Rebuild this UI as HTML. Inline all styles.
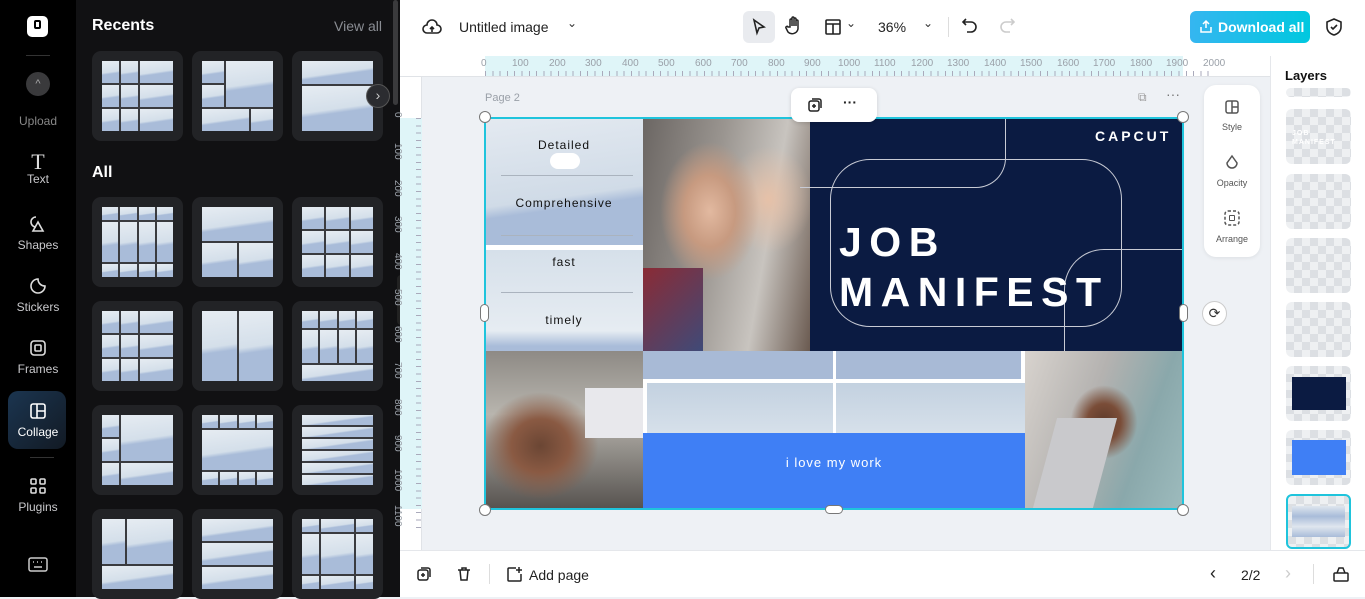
<!DOCTYPE html>
<html><head><meta charset="utf-8"><style>
*{box-sizing:border-box;margin:0;padding:0}
body{width:1365px;height:597px;overflow:hidden;font-family:"Liberation Sans",sans-serif;background:#eef1f5;position:relative}
.abs{position:absolute}
#rail{left:0;top:0;width:76px;height:597px;background:#000}
#panel{left:76px;top:0;width:324px;height:597px;background:#111113}
.ri{position:absolute;left:0;width:76px;text-align:center;color:#c9c9cc;font-size:12px}
.ri svg{display:block;margin:0 auto 4px}
.card{position:absolute;width:91px;height:90px;background:#222326;border-radius:9px;padding:10px}
.g{width:100%;height:100%;display:grid;gap:2px;background:#3a3b3f}
.g div{background:linear-gradient(172deg,#e6ecf2 0%,#d4dfea 50%,#a9bcd9 58%,#a9bcd9 100%)}
.sky{background:linear-gradient(172deg,#e4eaf1 0%,#d0dbe7 60%,#a9bcd9 68%,#a9bcd9 100%)}
#top{left:400px;top:0;width:965px;height:56px;background:#fff}
#bottom{left:400px;top:550px;width:965px;height:47px;background:#fff;border-top:1px solid #e5e7eb}
#layers{left:1270px;top:56px;width:95px;height:494px;background:#fff;border-left:1px solid #e5e7eb}
.lt{position:absolute;left:15px;width:65px;height:55px;border-radius:6px;background-color:#eef0f2;
background-image:linear-gradient(45deg,#dcdfe3 25%,transparent 25%,transparent 75%,#dcdfe3 75%),linear-gradient(45deg,#dcdfe3 25%,transparent 25%,transparent 75%,#dcdfe3 75%);background-size:16px 16px;background-position:0 0,8px 8px}
.h{position:absolute;width:12px;height:12px;border-radius:50%;background:#fff;border:1px solid #777}
</style></head><body>

<div id="rail" class="abs">
 <div class="abs" style="left:27px;top:16px;width:21px;height:21px;background:#fff;border-radius:5px"><div style="position:absolute;left:7px;top:4px;width:7px;height:9px;border:2px solid #000;border-radius:2px"></div></div>
 <div class="abs" style="left:26px;top:55px;width:24px;height:1px;background:#333"></div>
 <div class="abs" style="left:26px;top:72px;width:24px;height:24px;border-radius:50%;background:#3a3a3c;color:#aaa;font-size:11px;text-align:center;line-height:24px">^</div>
 <div class="ri" style="top:114px;color:#888">Upload</div>
 <div class="ri" style="top:152px"><div style="font-size:22px;font-family:'Liberation Serif',serif;color:#ddd;line-height:20px">T</div>Text</div>
 <div class="ri" style="top:214px"><svg width="20" height="20" viewBox="0 0 20 20" fill="none" stroke="#ddd" stroke-width="1.6"><path d="M8 3a5 5 0 1 0 0 10M10 8l5 9H5z"/></svg>Shapes</div>
 <div class="ri" style="top:276px"><svg width="20" height="20" viewBox="0 0 20 20" fill="none" stroke="#ddd" stroke-width="1.6"><path d="M17 10a7 7 0 1 1-7-7c0 4 3 7 7 7z"/></svg>Stickers</div>
 <div class="ri" style="top:338px"><svg width="20" height="20" viewBox="0 0 20 20" fill="none" stroke="#ddd" stroke-width="1.6"><rect x="3" y="3" width="14" height="14" rx="3"/><rect x="7" y="7" width="6" height="6" rx="1"/></svg>Frames</div>
 <div class="abs" style="left:8px;top:391px;width:58px;height:58px;border-radius:10px;background:linear-gradient(135deg,#1b3550,#121a24)"></div>
 <div class="ri" style="top:401px;color:#fff"><svg width="20" height="20" viewBox="0 0 20 20" fill="none" stroke="#fff" stroke-width="1.6"><rect x="3" y="3" width="14" height="14" rx="2"/><path d="M9 3v14M9 10h8"/></svg>Collage</div>
 <div class="abs" style="left:30px;top:457px;width:24px;height:1px;background:#333"></div>
 <div class="ri" style="top:476px"><svg width="20" height="20" viewBox="0 0 20 20" fill="none" stroke="#ddd" stroke-width="1.6"><rect x="3" y="3" width="5" height="5" rx="1"/><rect x="12" y="3" width="5" height="5" rx="1"/><rect x="3" y="12" width="5" height="5" rx="1"/><rect x="12" y="12" width="5" height="5" rx="1"/></svg>Plugins</div>
 <svg class="abs" style="left:28px;top:557px" width="20" height="16" viewBox="0 0 20 16" fill="none" stroke="#ccc" stroke-width="1.5"><rect x="1" y="1" width="18" height="13" rx="2"/><path d="M5 5h1M9 5h1M13 5h1M6 10h8"/></svg>
</div>

<div id="panel" class="abs">
 <div class="abs" style="left:16px;top:17px;color:#fff;font-weight:bold;font-size:16px">Recents</div>
 <div class="abs" style="left:258px;top:18px;color:#8a8d93;font-size:14px">View all</div>
 <div class="abs" style="left:16px;top:164px;color:#fff;font-weight:bold;font-size:16px">All</div>
 <div class="abs" style="left:317px;top:0;width:5px;height:105px;background:#3a3a3c;border-radius:3px"></div>
</div>

<div class="card" style="left:92px;top:51px"><div class="g" style="grid-template-columns:1fr 1fr 2fr;grid-template-rows:1fr 1fr 1fr"><div></div><div></div><div></div><div></div><div></div><div></div><div></div><div></div><div></div></div></div>
<div class="card" style="left:192px;top:51px"><div class="g" style="grid-template-columns:1fr 1fr 1fr;grid-template-rows:1fr 1fr 1fr"><div></div><div style="grid-column:span 2;grid-row:span 2"></div><div></div><div style="grid-column:span 2"></div><div></div></div></div>
<div class="card" style="left:292px;top:51px"><div class="g" style="grid-template-rows:1fr 2fr"><div></div><div></div></div></div>
<div class="abs" style="left:366px;top:84px;width:24px;height:24px;border-radius:50%;background:#2b2c30;border:1px solid #555;color:#ccc;text-align:center;line-height:21px;font-size:14px">›</div>

<div class="card" style="left:92px;top:197px"><div class="g" style="grid-template-columns:1fr 1fr 1fr 1fr;grid-template-rows:1fr 3fr 1fr"><div></div><div></div><div></div><div></div><div></div><div></div><div></div><div></div><div></div><div></div><div></div><div></div></div></div>
<div class="card" style="left:192px;top:197px"><div class="g" style="grid-template-columns:1fr 1fr;grid-template-rows:1fr 1fr"><div style="grid-column:span 2"></div><div></div><div></div></div></div>
<div class="card" style="left:292px;top:197px"><div class="g" style="grid-template-columns:1fr 1fr 1fr;grid-template-rows:1fr 1fr 1fr"><div></div><div></div><div></div><div></div><div></div><div></div><div></div><div></div><div></div></div></div>
<div class="card" style="left:92px;top:301px"><div class="g" style="grid-template-columns:1fr 1fr 2fr;grid-template-rows:1fr 1fr 1fr"><div></div><div></div><div></div><div></div><div></div><div></div><div></div><div></div><div></div></div></div>
<div class="card" style="left:192px;top:301px"><div class="g" style="grid-template-columns:1fr 1fr"><div></div><div></div></div></div>
<div class="card" style="left:292px;top:301px"><div class="g" style="grid-template-columns:1fr 1fr 1fr 1fr;grid-template-rows:1fr 2fr 1fr"><div></div><div></div><div></div><div></div><div></div><div></div><div></div><div></div><div style="grid-column:span 4"></div></div></div>
<div class="card" style="left:92px;top:405px"><div class="g" style="grid-template-columns:1fr 3fr;grid-template-rows:1fr 1fr 1fr"><div></div><div style="grid-row:span 2"></div><div></div><div></div><div></div></div></div>
<div class="card" style="left:192px;top:405px"><div class="g" style="grid-template-columns:1fr 1fr 1fr 1fr;grid-template-rows:1fr 3fr 1fr"><div></div><div></div><div></div><div></div><div style="grid-column:span 4"></div><div></div><div></div><div></div><div></div></div></div>
<div class="card" style="left:292px;top:405px"><div class="g" style="grid-template-rows:repeat(6,1fr)"><div></div><div></div><div></div><div></div><div></div><div></div></div></div>
<div class="card" style="left:92px;top:509px"><div class="g" style="grid-template-columns:1fr 2fr;grid-template-rows:2fr 1fr"><div></div><div></div><div style="grid-column:span 2"></div></div></div>
<div class="card" style="left:192px;top:509px"><div class="g" style="grid-template-rows:1fr 1fr 1fr"><div></div><div></div><div></div></div></div>
<div class="card" style="left:292px;top:509px"><div class="g" style="grid-template-columns:1fr 2fr 1fr;grid-template-rows:1fr 3fr 1fr"><div></div><div></div><div></div><div></div><div></div><div></div><div></div><div></div><div></div></div></div>
<div class="abs" style="left:397px;top:275px;width:8px;height:50px;background:#222;border-radius:4px"></div>

<div id="top" class="abs">
 <svg class="abs" style="left:22px;top:17px" width="20" height="20" viewBox="0 0 20 20" fill="none" stroke="#222" stroke-width="1.6"><path d="M5 16h10a4 4 0 0 0 0-8 5 5 0 0 0-10 0 4 4 0 0 0 0 8z"/><path d="M10 15v-5M8 12l2-2 2 2"/></svg>
 <div class="abs" style="left:59px;top:19px;font-size:14px;color:#222">Untitled image</div>
 <div class="abs" style="left:167px;top:16px;font-size:12px;color:#333">⌄</div>
 <div class="abs" style="left:343px;top:11px;width:32px;height:32px;border-radius:6px;background:#e9ebef"></div>
 <svg class="abs" style="left:351px;top:18px" width="16" height="18" viewBox="0 0 16 18" fill="none" stroke="#222" stroke-width="1.6"><path d="M3 2l10 7-5 1-2 5z"/></svg>
 <svg class="abs" style="left:385px;top:16px" width="18" height="20" viewBox="0 0 18 20" fill="none" stroke="#222" stroke-width="1.5"><path d="M5 11V4a1 1 0 0 1 2 0v6V2a1 1 0 0 1 2 0v8V3a1 1 0 0 1 2 0v7V5a1 1 0 0 1 2 0v8a6 6 0 0 1-10 3l-2-4a1 1 0 0 1 2-1z"/></svg>
 <svg class="abs" style="left:424px;top:18px" width="18" height="18" viewBox="0 0 18 18" fill="none" stroke="#222" stroke-width="1.6"><rect x="2" y="2" width="14" height="14" rx="1"/><path d="M2 6h14M9 6v10"/></svg>
 <div class="abs" style="left:446px;top:16px;font-size:12px;color:#333">⌄</div>
 <div class="abs" style="left:478px;top:19px;font-size:14px;color:#222">36%</div>
 <div class="abs" style="left:523px;top:16px;font-size:12px;color:#333">⌄</div>
 <div class="abs" style="left:548px;top:17px;width:1px;height:20px;background:#ddd"></div>
 <svg class="abs" style="left:561px;top:17px" width="18" height="18" viewBox="0 0 18 18" fill="none" stroke="#222" stroke-width="1.6"><path d="M5 2L2 5l3 3M2 5h8a5 5 0 0 1 0 10H6"/></svg>
 <svg class="abs" style="left:598px;top:17px" width="18" height="18" viewBox="0 0 18 18" fill="none" stroke="#ccc" stroke-width="1.6"><path d="M13 2l3 3-3 3M16 5H8a5 5 0 0 0 0 10h4"/></svg>
 <div class="abs" style="left:790px;top:11px;width:120px;height:32px;border-radius:6px;background:linear-gradient(90deg,#35b6f0,#00c8df);color:#fff;font-size:14px;font-weight:bold;line-height:32px;padding-left:28px">Download all</div>
 <svg class="abs" style="left:800px;top:19px" width="12" height="14" viewBox="0 0 12 14" fill="none" stroke="#fff" stroke-width="1.5"><path d="M6 9V2M3 5l3-3 3 3M1 8v5h10V8"/></svg>
 <svg class="abs" style="left:925px;top:17px" width="18" height="20" viewBox="0 0 18 20" fill="none" stroke="#222" stroke-width="1.6"><path d="M9 2l7 3v5c0 4-3 7-7 8-4-1-7-4-7-8V5z"/><path d="M6 10l2 2 4-4"/></svg>
</div>

<div class="abs" style="left:400px;top:56px;width:870px;height:21px;background:#fff;border-bottom:1px solid #e0e3e7"></div>
<div class="abs" style="left:485px;top:56px;width:698px;height:20px;background:#dff5f8"></div>
<div class="abs" style="left:400px;top:77px;width:22px;height:473px;background:#fff;border-right:1px solid #e0e3e7"></div>
<div class="abs" style="left:400px;top:118px;width:22px;height:391px;background:#dff5f8"></div>
<div class="abs" style="left:481px;top:58px;font-size:10px;color:#9aa0a8;white-space:nowrap">
<span style="position:absolute;left:0">0</span><span style="position:absolute;left:31px">100</span><span style="position:absolute;left:68px">200</span><span style="position:absolute;left:104px">300</span><span style="position:absolute;left:141px">400</span><span style="position:absolute;left:177px">500</span><span style="position:absolute;left:214px">600</span><span style="position:absolute;left:250px">700</span><span style="position:absolute;left:287px">800</span><span style="position:absolute;left:323px">900</span><span style="position:absolute;left:357px">1000</span><span style="position:absolute;left:393px">1100</span><span style="position:absolute;left:430px">1200</span><span style="position:absolute;left:466px">1300</span><span style="position:absolute;left:503px">1400</span><span style="position:absolute;left:539px">1500</span><span style="position:absolute;left:576px">1600</span><span style="position:absolute;left:612px">1700</span><span style="position:absolute;left:649px">1800</span><span style="position:absolute;left:685px">1900</span><span style="position:absolute;left:722px">2000</span></div>
<div class="abs" style="left:485px;top:71px;width:730px;height:5px;background:repeating-linear-gradient(90deg,#aab 0 1px,transparent 1px 7.3px)"></div>
<div class="abs" style="left:416px;top:118px;width:5px;height:410px;background:repeating-linear-gradient(180deg,#aab 0 1px,transparent 1px 7.3px)"></div>
<div class="abs" style="left:402px;top:112px;font-size:10px;color:#9aa0a8;writing-mode:vertical-rl;line-height:10px">
<span style="position:absolute;top:0">0</span><span style="position:absolute;top:31px">100</span><span style="position:absolute;top:68px">200</span><span style="position:absolute;top:104px">300</span><span style="position:absolute;top:141px">400</span><span style="position:absolute;top:177px">500</span><span style="position:absolute;top:214px">600</span><span style="position:absolute;top:250px">700</span><span style="position:absolute;top:287px">800</span><span style="position:absolute;top:323px">900</span><span style="position:absolute;top:357px">1000</span><span style="position:absolute;top:393px">1100</span></div>

<div class="abs" style="left:485px;top:92px;font-size:11px;color:#9aa0a8">Page 2</div>
<div class="abs" style="left:1138px;top:90px;font-size:12px;color:#999">⧉</div>
<div class="abs" style="left:1166px;top:86px;font-size:14px;color:#777">···</div>

<div class="abs" style="left:485px;top:118px;width:698px;height:391px;overflow:hidden;background:#fff">
 <div class="abs sky" style="left:0;top:0;width:158px;height:127px"></div>
 <div class="abs sky" style="left:0;top:132px;width:158px;height:101px;background:linear-gradient(180deg,#d6e0ea,#e6ecf2 80%,#a9bcd9 95%)"></div>
 <div class="abs" style="left:16px;top:57px;width:132px;height:1px;background:#aab3be"></div>
 <div class="abs" style="left:16px;top:117px;width:132px;height:1px;background:#aab3be"></div>
 <div class="abs" style="left:16px;top:174px;width:132px;height:1px;background:#aab3be"></div>
 <div class="abs" style="left:0;top:20px;width:158px;text-align:center;font-size:12px;letter-spacing:1px;color:#111">Detailed</div>
 <div class="abs" style="left:0;top:78px;width:158px;text-align:center;font-size:12px;letter-spacing:1px;color:#111">Comprehensive</div>
 <div class="abs" style="left:0;top:137px;width:158px;text-align:center;font-size:12px;letter-spacing:1px;color:#111">fast</div>
 <div class="abs" style="left:0;top:195px;width:158px;text-align:center;font-size:12px;letter-spacing:1px;color:#111">timely</div>
 <div class="abs" style="left:65px;top:35px;width:30px;height:16px;border-radius:10px;background:#fff"></div>
 <div class="abs" style="left:158px;top:0;width:167px;height:233px;background:radial-gradient(ellipse at 40% 40%,#e2b9a0 0,#c79a80 18%,transparent 35%),radial-gradient(ellipse at 75% 35%,#e6c1a8 0,transparent 25%),linear-gradient(100deg,#6b6663,#9a9590 40%,#c8c4bf 70%,#6a5a50);"></div>
 <div class="abs" style="left:158px;top:150px;width:60px;height:83px;background:linear-gradient(135deg,#8a2b35,#3f4a78)"></div>
 <div class="abs" style="left:325px;top:0;width:373px;height:233px;background:#0b1b42">
  <div class="abs" style="left:285px;top:10px;color:#fff;font-weight:bold;font-size:14px;letter-spacing:3px">CAPCUT</div>
  <div class="abs" style="left:20px;top:41px;width:292px;height:168px;border:1px solid #c8cbd5;border-radius:40px"></div>
  <div class="abs" style="left:-10px;top:-10px;width:206px;height:80px;border:1px solid #c8cbd5;border-radius:0 0 30px 0;border-top:none;border-left:none"></div>
  <div class="abs" style="left:254px;top:131px;width:140px;height:120px;border:1px solid #c8cbd5;border-radius:40px 0 0 0;border-right:none;border-bottom:none"></div>
  <div class="abs" style="left:29px;top:99px;color:#fff;font-weight:bold;font-size:41px;letter-spacing:7.5px;line-height:50px">JOB<br>MANIFEST</div>
 </div>
 <div class="abs" style="left:0;top:233px;width:158px;height:158px;background:radial-gradient(ellipse at 35% 60%,#6b4634 0,#8a5a43 20%,transparent 40%),linear-gradient(180deg,#8e8a85,#b8b5ae 40%,#56524f)"></div>
 <div class="abs" style="left:100px;top:270px;width:58px;height:50px;background:#e8e8ec"></div>
 <div class="abs" style="left:158px;top:233px;width:382px;height:82px;background:#fff"></div>
 <div class="abs" style="left:158px;top:233px;width:190px;height:28px;background:#a8bad6"></div>
 <div class="abs" style="left:351px;top:233px;width:185px;height:28px;background:#a8bad6"></div>
 <div class="abs sky" style="left:162px;top:265px;width:186px;height:50px;background:linear-gradient(#c3d1e0,#d6e0ea)"></div>
 <div class="abs sky" style="left:351px;top:265px;width:189px;height:50px;background:linear-gradient(#c3d1e0,#d6e0ea)"></div>
 <div class="abs" style="left:158px;top:315px;width:382px;height:76px;background:#3f7ff5;color:#fff;font-size:13px;letter-spacing:1px;text-align:center;line-height:60px">i love my work</div>
 <div class="abs" style="left:540px;top:233px;width:158px;height:158px;background:radial-gradient(ellipse at 50% 45%,#5e3a2a 0,#7a4d38 15%,transparent 30%),linear-gradient(110deg,#d8d3ce,#b4b2b0 40%,#8aa8ab 70%,#9dbbbd)"></div>
 <div class="abs" style="left:560px;top:300px;width:60px;height:90px;background:#c9c9cc;transform:skewX(-15deg)"></div>
</div>
<div class="abs" style="left:484px;top:117px;width:700px;height:393px;border:2px solid #1fc4dc"></div>
<div class="h" style="left:479px;top:111px"></div><div class="h" style="left:1177px;top:111px"></div>
<div class="h" style="left:479px;top:504px"></div><div class="h" style="left:1177px;top:504px"></div>
<div class="abs" style="left:480px;top:304px;width:9px;height:18px;border-radius:5px;background:#fff;border:1px solid #777"></div>
<div class="abs" style="left:1179px;top:304px;width:9px;height:18px;border-radius:5px;background:#fff;border:1px solid #777"></div>
<div class="abs" style="left:825px;top:505px;width:18px;height:9px;border-radius:5px;background:#fff;border:1px solid #777"></div>
<div class="abs" style="left:1202px;top:301px;width:25px;height:25px;border-radius:50%;background:#fff;border:1px solid #ccc;text-align:center;line-height:23px;font-size:14px;color:#333">⟳</div>

<div class="abs" style="left:791px;top:88px;width:86px;height:34px;background:#fff;border-radius:8px;box-shadow:0 1px 4px rgba(0,0,0,.15)">
 <svg class="abs" style="left:16px;top:9px" width="16" height="16" viewBox="0 0 16 16" fill="none" stroke="#222" stroke-width="1.5"><rect x="2" y="4" width="10" height="10" rx="2"/><path d="M5 2h7a2 2 0 0 1 2 2v7M7 7v4M5 9h4"/></svg>
 <div class="abs" style="left:52px;top:6px;font-size:14px;color:#222;font-weight:bold">···</div>
</div>

<div class="abs" style="left:1204px;top:85px;width:56px;height:172px;background:#fff;border-radius:12px;box-shadow:0 1px 4px rgba(0,0,0,.08);font-size:9px;color:#555;text-align:center">
 <svg class="abs" style="left:20px;top:14px" width="16" height="16" viewBox="0 0 16 16" fill="none" stroke="#555" stroke-width="1.5"><rect x="2" y="2" width="12" height="12" rx="2"/><path d="M8 2v12M8 8h6"/></svg>
 <div class="abs" style="left:0;top:37px;width:56px">Style</div>
 <svg class="abs" style="left:20px;top:69px" width="16" height="18" viewBox="0 0 16 18" fill="none" stroke="#555" stroke-width="1.5"><path d="M8 2l5 7a5 5 0 1 1-10 0z"/></svg>
 <div class="abs" style="left:0;top:93px;width:56px">Opacity</div>
 <svg class="abs" style="left:20px;top:125px" width="16" height="16" viewBox="0 0 16 16" fill="none" stroke="#555" stroke-width="1.5" stroke-dasharray="3 2"><rect x="1" y="1" width="14" height="14" rx="3"/></svg>
 <div class="abs" style="left:25px;top:130px;width:6px;height:6px;border:1.5px solid #555;border-radius:1px"></div>
 <div class="abs" style="left:0;top:149px;width:56px">Arrange</div>
</div>

<div id="layers" class="abs">
 <div class="abs" style="left:14px;top:12px;font-weight:bold;font-size:13px;color:#111">Layers</div>
 <div class="lt" style="top:32px;height:9px"></div>
 <div class="lt" style="top:53px"><div style="position:absolute;left:6px;top:20px;font-size:7px;color:#fff;font-weight:bold;letter-spacing:1px;line-height:9px">JOB<br>MANIFEST</div></div>
 <div class="lt" style="top:118px"></div>
 <div class="lt" style="top:182px"></div>
 <div class="lt" style="top:246px"></div>
 <div class="lt" style="top:310px"><div style="position:absolute;left:6px;top:11px;width:54px;height:33px;background:#0b1b42"></div></div>
 <div class="lt" style="top:374px"><div style="position:absolute;left:6px;top:10px;width:54px;height:35px;background:#3f7ff5"></div></div>
 <div class="lt" style="top:438px;border:2px solid #1fc4dc"><div style="position:absolute;left:4px;top:10px;width:53px;height:31px;background:linear-gradient(#dfe6ee,#a9bcd9,#dfe6ee,#a9bcd9)"></div></div>
</div>

<div id="bottom" class="abs">
 <svg class="abs" style="left:16px;top:15px" width="16" height="16" viewBox="0 0 16 16" fill="none" stroke="#222" stroke-width="1.5"><rect x="2" y="4" width="10" height="10" rx="2"/><path d="M5 2h7a2 2 0 0 1 2 2v7M7 7v4M5 9h4"/></svg>
 <svg class="abs" style="left:56px;top:15px" width="16" height="16" viewBox="0 0 16 16" fill="none" stroke="#222" stroke-width="1.5"><path d="M2 4h12M6 4V2h4v2M4 4l1 10h6l1-10"/></svg>
 <div class="abs" style="left:89px;top:13px;width:1px;height:20px;background:#ddd"></div>
 <svg class="abs" style="left:106px;top:15px" width="17" height="17" viewBox="0 0 17 17" fill="none" stroke="#222" stroke-width="1.5"><path d="M10 2H3a1 1 0 0 0-1 1v11a1 1 0 0 0 1 1h11a1 1 0 0 0 1-1V8M13 1v6M10 4h6"/></svg>
 <div class="abs" style="left:129px;top:16px;font-size:14px;color:#222">Add page</div>
 <div class="abs" style="left:810px;top:12px;font-size:18px;color:#222">‹</div>
 <div class="abs" style="left:841px;top:16px;font-size:14px;color:#222">2/2</div>
 <div class="abs" style="left:885px;top:12px;font-size:18px;color:#ccc">›</div>
 <div class="abs" style="left:913px;top:13px;width:1px;height:20px;background:#ddd"></div>
 <svg class="abs" style="left:932px;top:14px" width="18" height="18" viewBox="0 0 18 18" fill="none" stroke="#222" stroke-width="1.5"><rect x="2" y="8" width="14" height="8" rx="1"/><path d="M5 8l2-5h4l2 5"/></svg>
</div>
</body></html>
